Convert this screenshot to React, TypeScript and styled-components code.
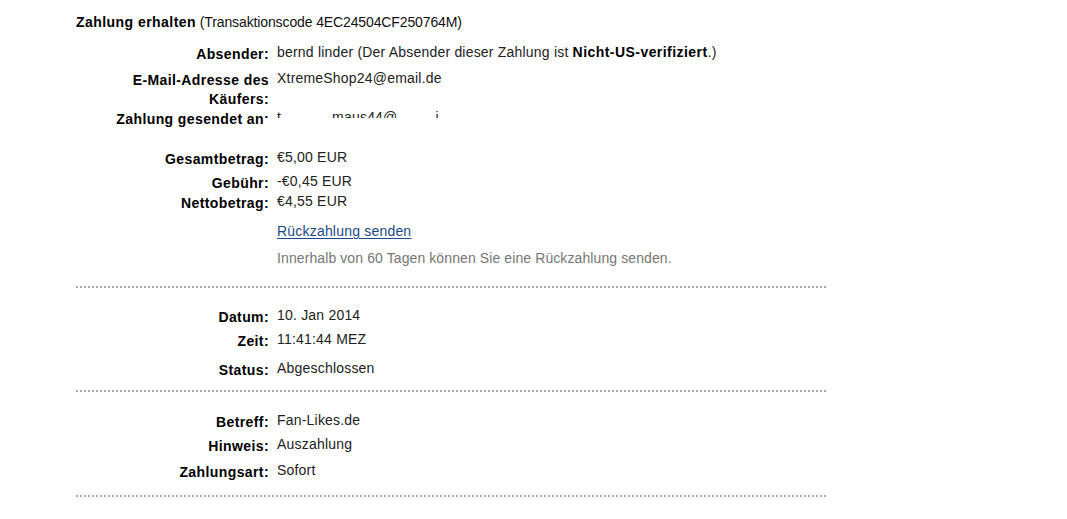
import React from "react";
import styled, { createGlobalStyle } from "styled-components";

const GlobalStyle = createGlobalStyle`
  html, body {
    margin: 0;
    padding: 0;
    background: #ffffff;
  }
  body {
    font-family: "Liberation Sans", Arial, Helvetica, sans-serif;
    font-size: 14px;
    color: #222222;
  }
`;

const Page = styled.div`
  padding: 13px 0 0 76px;
  width: 750px;
`;

const Title = styled.h1`
  margin: 0;
  font-size: 14px;
  line-height: 18px;
  font-weight: normal;
  letter-spacing: -0.12px;
  color: #111111;
`;

const Strong = styled.b`
  font-weight: bold;
  color: #000000;
  letter-spacing: 0.45px;
`;

const Row = styled.div<{ $mt: number }>`
  position: relative;
  display: grid;
  grid-template-columns: 193px 1fr;
  column-gap: 8px;
  align-items: start;
  margin-top: ${(p) => p.$mt}px;
  line-height: 19px;
`;

const Label = styled.div`
  padding-left: 34px;
  margin: 2px 0 -2px;
  text-align: right;
  font-weight: bold;
  letter-spacing: 0.4px;
  color: #000000;
`;

const Value = styled.div<{ $tone?: "muted" }>`
  letter-spacing: ${(p) => (p.$tone === "muted" ? "0.1px" : "0.2px")};
  color: ${(p) => (p.$tone === "muted" ? "#767676" : "#222222")};
`;

const Link = styled.a`
  color: #1b4a8a;
  text-decoration: underline;
  text-underline-offset: 2px;
  cursor: pointer;
`;

const Gap = styled.span<{ $w: number }>`
  display: inline-block;
  width: ${(p) => p.$w}px;
`;

const Mask = styled.div`
  position: absolute;
  left: 189px;
  top: 10px;
  width: 300px;
  height: 24px;
  background: #ffffff;
`;

const Dotted = styled.div<{ $mt: number }>`
  margin-top: ${(p) => p.$mt}px;
  width: 750px;
  height: 2px;
  background-image: repeating-linear-gradient(
    to right,
    #ababab 0,
    #ababab 2px,
    transparent 2px,
    transparent 4px
  );
`;

type Item = { label: string; value: React.ReactNode; mt: number; muted?: boolean };

const blockTwo: Item[] = [
  { label: "Datum:", value: "10. Jan 2014", mt: 18 },
  { label: "Zeit:", value: "11:41:44 MEZ", mt: 5 },
  { label: "Status:", value: "Abgeschlossen", mt: 10 },
];

const blockThree: Item[] = [
  { label: "Betreff:", value: "Fan-Likes.de", mt: 19 },
  { label: "Hinweis:", value: "Auszahlung", mt: 5 },
  { label: "Zahlungsart:", value: "Sofort", mt: 7 },
];

const amounts: Item[] = [
  { label: "Gesamtbetrag:", value: "€5,00 EUR", mt: 21 },
  { label: "Gebühr:", value: "-€0,45 EUR", mt: 5 },
  { label: "Nettobetrag:", value: "€4,55 EUR", mt: 1 },
];

const renderRows = (items: Item[]) =>
  items.map((it) => (
    <Row key={it.label} $mt={it.mt}>
      <Label>{it.label}</Label>
      <Value $tone={it.muted ? "muted" : undefined}>{it.value}</Value>
    </Row>
  ));

export default function App() {
  return (
    <>
      <GlobalStyle />
      <Page>
        <Title>
          <Strong>Zahlung erhalten</Strong> (Transaktionscode 4EC24504CF250764M)
        </Title>

        <Row $mt={12}>
          <Label>Absender:</Label>
          <Value>
            bernd linder (Der Absender dieser Zahlung ist <Strong>Nicht-US-verifiziert</Strong>.)
          </Value>
        </Row>
        <Row $mt={7}>
          <Label>E-Mail-Adresse des Käufers:</Label>
          <Value>XtremeShop24@email.de</Value>
        </Row>
        <Row $mt={1}>
          <Label>Zahlung gesendet an:</Label>
          <Value>
            t<Gap $w={51} />maus44@<Gap $w={38} />i
          </Value>
          <Mask />
        </Row>

        {renderRows(amounts)}

        <Row $mt={11}>
          <span />
          <Value>
            <Link>Rückzahlung senden</Link>
          </Value>
        </Row>
        <Row $mt={8}>
          <span />
          <Value $tone="muted">Innerhalb von 60 Tagen können Sie eine Rückzahlung senden.</Value>
        </Row>

        <Dotted $mt={18} />
        {renderRows(blockTwo)}
        <Dotted $mt={12} />
        {renderRows(blockThree)}
        <Dotted $mt={15} />
      </Page>
    </>
  );
}
